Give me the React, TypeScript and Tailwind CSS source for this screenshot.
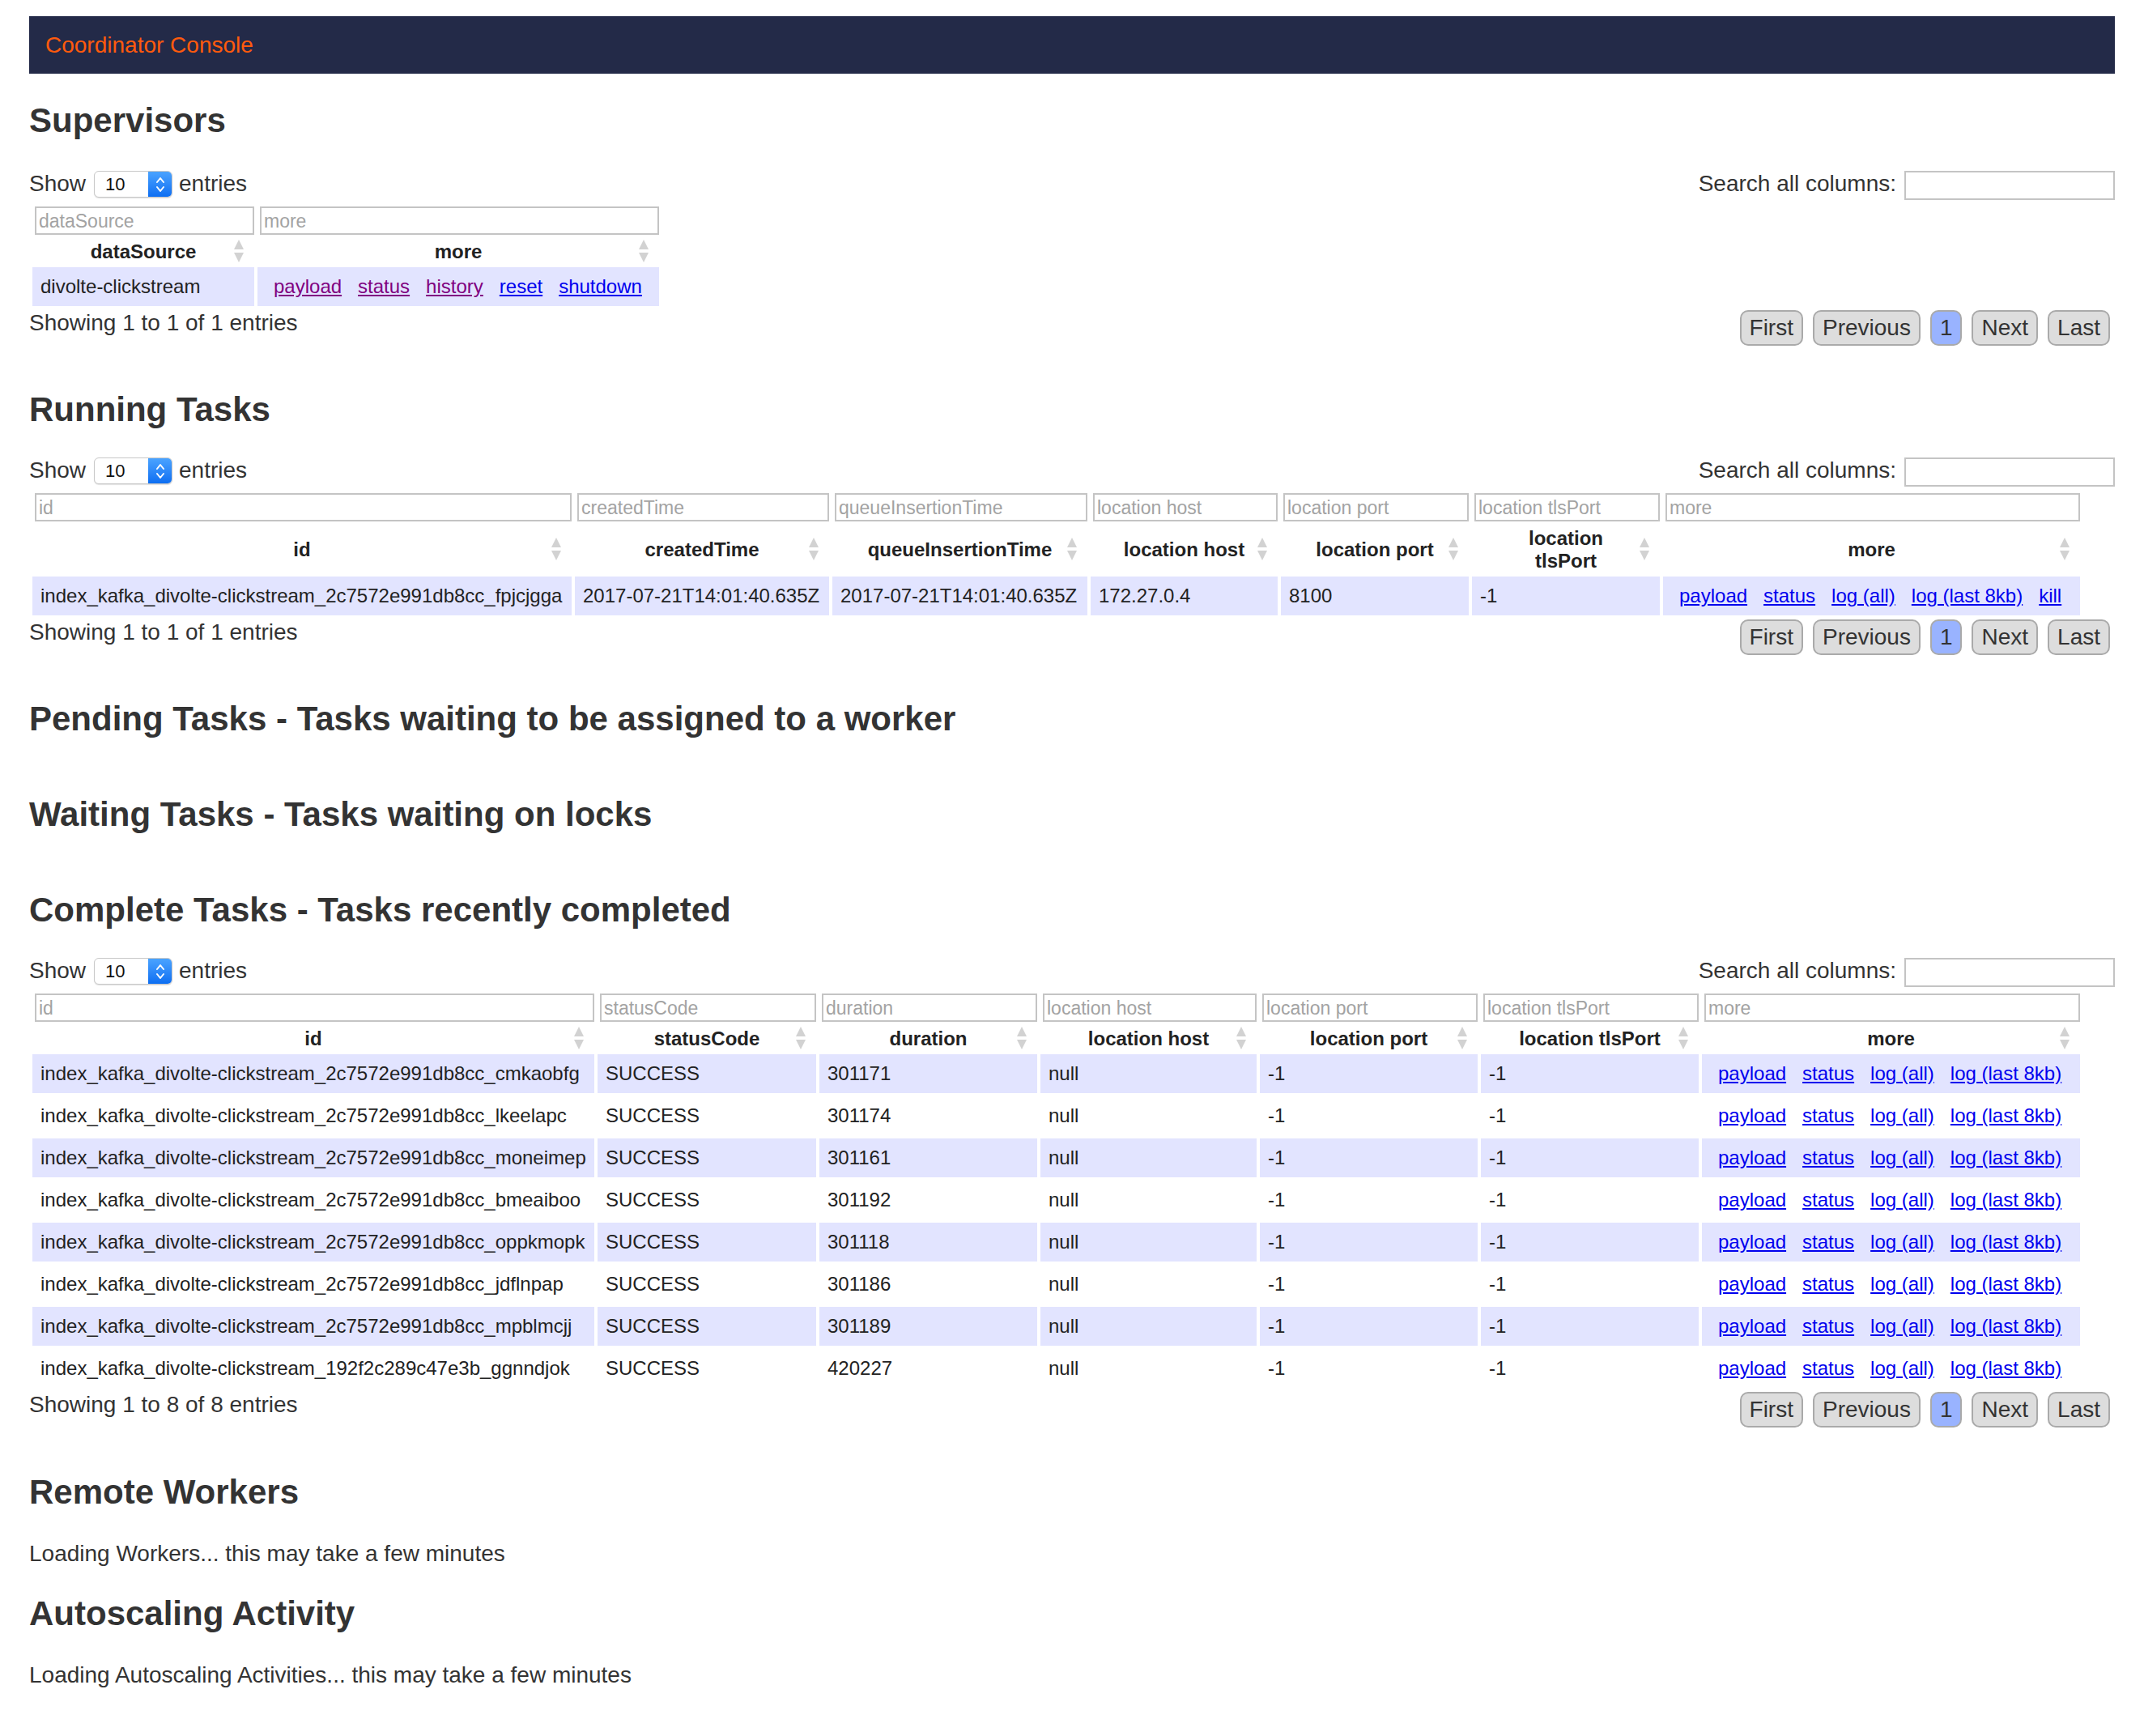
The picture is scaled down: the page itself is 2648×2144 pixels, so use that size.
import React from "react";

const FONT = "font-['Liberation_Sans',Arial,Helvetica,sans-serif]";

function SortIcon() {
  return (
    <svg
      className="absolute right-[12px] top-1/2 -translate-y-1/2"
      width="14"
      height="28"
      viewBox="0 0 14 28"
    >
      <polygon points="7,0 13,12 1,12" fill="#d2d2d2" />
      <polygon points="1,16 13,16 7,28" fill="#d2d2d2" />
    </svg>
  );
}

function SelectBox() {
  return (
    <div className="ml-[10px] mr-[8px] flex h-[33px] w-[97px] overflow-hidden rounded-[6px] border border-[#c8c8c8] bg-white shadow-[0_1px_1px_rgba(0,0,0,0.12)]">
      <div className="flex flex-1 items-center pl-[13px] text-[22px] leading-[26px] text-[#111]">10</div>
      <div className="flex w-[29px] items-center justify-center bg-gradient-to-b from-[#4aa3ff] to-[#0b6ef2]">
        <svg width="12" height="22" viewBox="0 0 12 22" fill="none" stroke="white" strokeWidth="2" strokeLinecap="round" strokeLinejoin="round">
          <polyline points="2,8 6,3 10,8" />
          <polyline points="2,14 6,19 10,14" />
        </svg>
      </div>
    </div>
  );
}

function ShowRow({ mt }: { mt: string }) {
  return (
    <div className={`${mt} flex items-start justify-between`}>
      <div className="flex items-start text-[28px] leading-[32px]">
        <span>Show</span>
        <SelectBox />
        <span>entries</span>
      </div>
      <div className="flex items-start">
        <span className="mr-[10px] text-[28px] leading-[32px]">Search all columns:</span>
        <input className="h-[36px] w-[260px] border-2 border-[#c4c4c4] bg-white outline-none" />
      </div>
    </div>
  );
}

function InfoRow({ text }: { text: string }) {
  const btn = "rounded-[10px] border-2 border-[#aaa] px-[10px] py-[4px] text-[28px] leading-[32px] text-[#333]";
  return (
    <div className="flex items-start justify-between pt-[1px]">
      <div className="text-[28px] leading-[32px]">{text}</div>
      <div className="mr-[6px] flex gap-[12px]">
        <span className={`${btn} bg-[#ddd]`}>First</span>
        <span className={`${btn} bg-[#ddd]`}>Previous</span>
        <span className={`${btn} bg-[#99b3ff]`}>1</span>
        <span className={`${btn} bg-[#ddd]`}>Next</span>
        <span className={`${btn} bg-[#ddd]`}>Last</span>
      </div>
    </div>
  );
}

type Col = { key: string; label: React.ReactNode; width: string };

function Links({ items }: { items: { t: string; visited?: boolean }[] }) {
  return (
    <span className="whitespace-nowrap">
      {items.map((l, i) => (
        <a
          key={i}
          href="#"
          className={`mx-[10px] underline ${l.visited ? "text-[#800080]" : "text-[#0000ee]"}`}
        >
          {l.t}
        </a>
      ))}
    </span>
  );
}

function DataTable({
  cols,
  rows,
  width,
}: {
  cols: Col[];
  rows: React.ReactNode[][];
  width: string;
}) {
  return (
    <table className={`${width} mt-[4px] table-fixed border-separate border-spacing-[4px]`}>
      <colgroup>
        {cols.map((c) => (
          <col key={c.key} className={c.width} />
        ))}
      </colgroup>
      <thead>
        <tr>
          {cols.map((c) => (
            <td key={c.key} className="p-0 pl-[3px]">
              <input
                placeholder={c.key}
                className="block h-[35px] w-full border-2 border-[#c4c4c4] bg-white px-[3px] pt-[2px] text-[23px] text-[#333] outline-none placeholder:text-[#a3a3a3]"
              />
            </td>
          ))}
        </tr>
        <tr>
          {cols.map((c) => (
            <th
              key={c.key}
              className="relative px-[10px] pb-[1px] pt-[3px] text-center align-middle text-[24px] font-bold leading-[28px] text-[#222]"
            >
              {c.label}
              <SortIcon />
            </th>
          ))}
        </tr>
      </thead>
      <tbody>
        {rows.map((r, i) => (
          <tr key={i} className={i % 2 === 0 ? "bg-[#e2e4ff]" : "bg-white"}>
            {r.map((cell, j) => (
              <td key={j} className="whitespace-nowrap px-[10px] py-[10px] text-[24px] leading-[28px] text-[#222]">
                {cell}
              </td>
            ))}
          </tr>
        ))}
      </tbody>
    </table>
  );
}

const H2 = ({ mt, children }: { mt: string; children: React.ReactNode }) => (
  <h2 className={`${mt} text-[42px] font-bold leading-[48px] text-[#333]`}>{children}</h2>
);

export default function App() {
  const supCols: Col[] = [
    { key: "dataSource", label: "dataSource", width: "w-[274px]" },
    { key: "more", label: "more", width: "w-[496px]" },
  ];
  const supRows = [
    [
      "divolte-clickstream",
      <Links
        items={[
          { t: "payload", visited: true },
          { t: "status", visited: true },
          { t: "history", visited: true },
          { t: "reset" },
          { t: "shutdown" },
        ]}
      />,
    ],
  ];

  const runCols: Col[] = [
    { key: "id", label: "id", width: "w-[666px]" },
    { key: "createdTime", label: "createdTime", width: "w-[314px]" },
    { key: "queueInsertionTime", label: "queueInsertionTime", width: "w-[315px]" },
    { key: "location host", label: "location host", width: "w-[231px]" },
    { key: "location port", label: "location port", width: "w-[232px]" },
    {
      key: "location tlsPort",
      label: (
        <>
          location
          <br />
          tlsPort
        </>
      ),
      width: "w-[232px]",
    },
    { key: "more", label: "more", width: "w-[515px]" },
  ];
  const runRows = [
    [
      "index_kafka_divolte-clickstream_2c7572e991db8cc_fpjcjgga",
      "2017-07-21T14:01:40.635Z",
      "2017-07-21T14:01:40.635Z",
      "172.27.0.4",
      "8100",
      "-1",
      <Links items={[{ t: "payload" }, { t: "status" }, { t: "log (all)" }, { t: "log (last 8kb)" }, { t: "kill" }]} />,
    ],
  ];

  const compCols: Col[] = [
    { key: "id", label: "id", width: "w-[694px]" },
    { key: "statusCode", label: "statusCode", width: "w-[270px]" },
    { key: "duration", label: "duration", width: "w-[269px]" },
    { key: "location host", label: "location host", width: "w-[267px]" },
    { key: "location port", label: "location port", width: "w-[269px]" },
    { key: "location tlsPort", label: "location tlsPort", width: "w-[269px]" },
    { key: "more", label: "more", width: "w-[467px]" },
  ];
  const compData: [string, string][] = [
    ["index_kafka_divolte-clickstream_2c7572e991db8cc_cmkaobfg", "301171"],
    ["index_kafka_divolte-clickstream_2c7572e991db8cc_lkeelapc", "301174"],
    ["index_kafka_divolte-clickstream_2c7572e991db8cc_moneimep", "301161"],
    ["index_kafka_divolte-clickstream_2c7572e991db8cc_bmeaiboo", "301192"],
    ["index_kafka_divolte-clickstream_2c7572e991db8cc_oppkmopk", "301118"],
    ["index_kafka_divolte-clickstream_2c7572e991db8cc_jdflnpap", "301186"],
    ["index_kafka_divolte-clickstream_2c7572e991db8cc_mpblmcjj", "301189"],
    ["index_kafka_divolte-clickstream_192f2c289c47e3b_ggnndjok", "420227"],
  ];
  const compRows = compData.map(([id, d]) => [
    id,
    "SUCCESS",
    d,
    "null",
    "-1",
    "-1",
    <Links items={[{ t: "payload" }, { t: "status" }, { t: "log (all)" }, { t: "log (last 8kb)" }]} />,
  ]);

  return (
    <div className={`${FONT} min-h-screen bg-white px-[36px] pb-[60px] pt-[20px] text-[#333]`}>
      <div className="flex h-[71px] items-center bg-[#232a48] pl-[20px]">
        <span className="text-[28px] leading-[32px] text-[#ff5a0d]">Coordinator Console</span>
      </div>

      <H2 mt="mt-[34px]">Supervisors</H2>
      <ShowRow mt="mt-[38px]" />
      <DataTable cols={supCols} rows={supRows} width="w-[782px]" />
      <InfoRow text="Showing 1 to 1 of 1 entries" />

      <H2 mt="mt-[55px]">Running Tasks</H2>
      <ShowRow mt="mt-[35px]" />
      <DataTable cols={runCols} rows={runRows} width="w-[2537px]" />
      <InfoRow text="Showing 1 to 1 of 1 entries" />

      <H2 mt="mt-[55px]">Pending Tasks - Tasks waiting to be assigned to a worker</H2>
      <H2 mt="mt-[70px]">Waiting Tasks - Tasks waiting on locks</H2>
      <H2 mt="mt-[70px]">Complete Tasks - Tasks recently completed</H2>
      <ShowRow mt="mt-[35px]" />
      <DataTable cols={compCols} rows={compRows} width="w-[2537px]" />
      <InfoRow text="Showing 1 to 8 of 8 entries" />

      <H2 mt="mt-[56px]">Remote Workers</H2>
      <p className="mt-[36px] text-[28px] leading-[32px]">Loading Workers... this may take a few minutes</p>
      <H2 mt="mt-[34px]">Autoscaling Activity</H2>
      <p className="mt-[36px] text-[28px] leading-[32px]">Loading Autoscaling Activities... this may take a few minutes</p>
    </div>
  );
}
